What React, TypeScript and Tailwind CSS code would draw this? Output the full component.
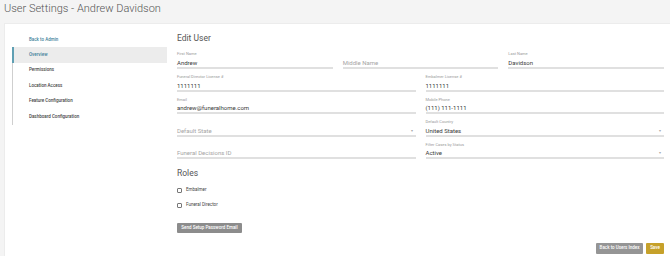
import React from "react";

type FieldProps = {
  label?: string;
  value?: string;
  placeholder?: string;
  select?: boolean;
};

function Field({ label, value, placeholder, select }: FieldProps) {
  return (
    <div className="flex flex-col">
      <div className="h-[5px] text-[4px] leading-[5px] text-[#9a9a9a]">{label}</div>
      <div className="mt-[2.5px] flex h-[8px] items-center justify-between border-b-2 border-[#e0e0e0] box-content">
        {value ? (
          <span className="text-[6px] leading-[8px] text-[#3a3a3a]">{value}</span>
        ) : (
          <span className="text-[6px] leading-[8px] text-[#a5a5a5]">{placeholder}</span>
        )}
        {select && <span className="pr-[3px] text-[4px] leading-[8px] text-[#aaa]">▾</span>}
      </div>
    </div>
  );
}

function Checkbox({ label }: { label: string }) {
  return (
    <div className="flex h-[15px] items-center gap-[4px] leading-none">
      <div className="h-[5px] w-[5px] rounded-[1px] border border-[#777] bg-white"></div>
      <span className="text-[4.5px] text-[#444]">{label}</span>
    </div>
  );
}

export default function App() {
  const navItems = [
    "Overview",
    "Permissions",
    "Location Access",
    "Feature Configuration",
    "Dashboard Configuration",
  ];

  return (
    <div className="min-h-screen w-[670px] overflow-hidden bg-[#f4f4f4] font-['Roboto',sans-serif] leading-none">
      {/* Title */}
      <h1 className="h-[23px] pl-[4px] pt-[2px] text-[11px] font-light leading-[13px] text-[#555]">
        User Settings - Andrew Davidson
      </h1>

      {/* Card */}
      <div className="ml-[4px] flex h-[240px] w-[680px] border border-[#ececec] bg-white">
        {/* Sidebar */}
        <div className="w-[162px] shrink-0 pl-[7px] pt-[9px]">
          <div className="flex h-[14px] items-center pl-[17px] text-[4.5px] font-medium text-[#3f7f9a]">
            Back to Admin
          </div>
          <div className="border-l border-[#cfcfcf]">
            {navItems.map((item, idx) => (
              <div
                key={idx}
                className={
                  idx === 0
                    ? "-ml-px flex h-[15.5px] items-center border-l-2 border-[#5f9fb3] bg-[#ececec] pl-[15px] text-[4.5px] font-medium text-[#3f7f9a]"
                    : "flex h-[15.5px] items-center pl-[16px] text-[4.5px] font-medium text-[#444]"
                }
              >
                {item}
              </div>
            ))}
          </div>
        </div>

        {/* Main */}
        <div className="ml-[10px] flex w-[487px] flex-col pt-[8px]">
          <h2 className="text-[8.5px] leading-[12px] text-[#555]">Edit User</h2>

          <div className="mt-[7px] grid grid-cols-3 gap-x-[10px]">
            <Field label="First Name" value="Andrew" />
            <Field placeholder="Middle Name" />
            <Field label="Last Name" value="Davidson" />
          </div>

          <div className="mt-[5.5px] grid grid-cols-2 gap-x-[10px] gap-y-[5px]">
            <Field label="Funeral Director License #" value="1111111" />
            <Field label="Embalmer License #" value="1111111" />
            <Field label="Email" value="andrew@funeralhome.com" />
            <Field label="Mobile Phone" value="(111) 111-1111" />
            <Field placeholder="Default State" select />
            <Field label="Default Country" value="United States" select />
            <Field placeholder="Funeral Decisions ID" />
            <Field label="Filter Cases by Status" value="Active" select />
          </div>

          <h2 className="mt-[8px] text-[8.5px] leading-[12px] text-[#555]">Roles</h2>
          <div className="mt-[3.5px] flex flex-col">
            <Checkbox label="Embalmer" />
            <Checkbox label="Funeral Director" />
          </div>

          <div className="mt-[10.5px] flex">
            <button className="h-[10px] w-[65px] rounded-[1px] bg-[#8c8c8c] text-[4.5px] font-medium text-white">
              Send Setup Password Email
            </button>
          </div>

          <div className="mt-[10px] flex justify-end gap-[3px]">
            <button className="h-[11px] w-[47px] rounded-[1px] bg-[#959595] text-[4.5px] font-medium text-white">
              Back to Users Index
            </button>
            <button className="h-[11px] w-[18px] rounded-[1px] bg-[#c6a12a] text-[4.5px] font-medium text-white">
              Save
            </button>
          </div>
        </div>
      </div>
    </div>
  );
}
